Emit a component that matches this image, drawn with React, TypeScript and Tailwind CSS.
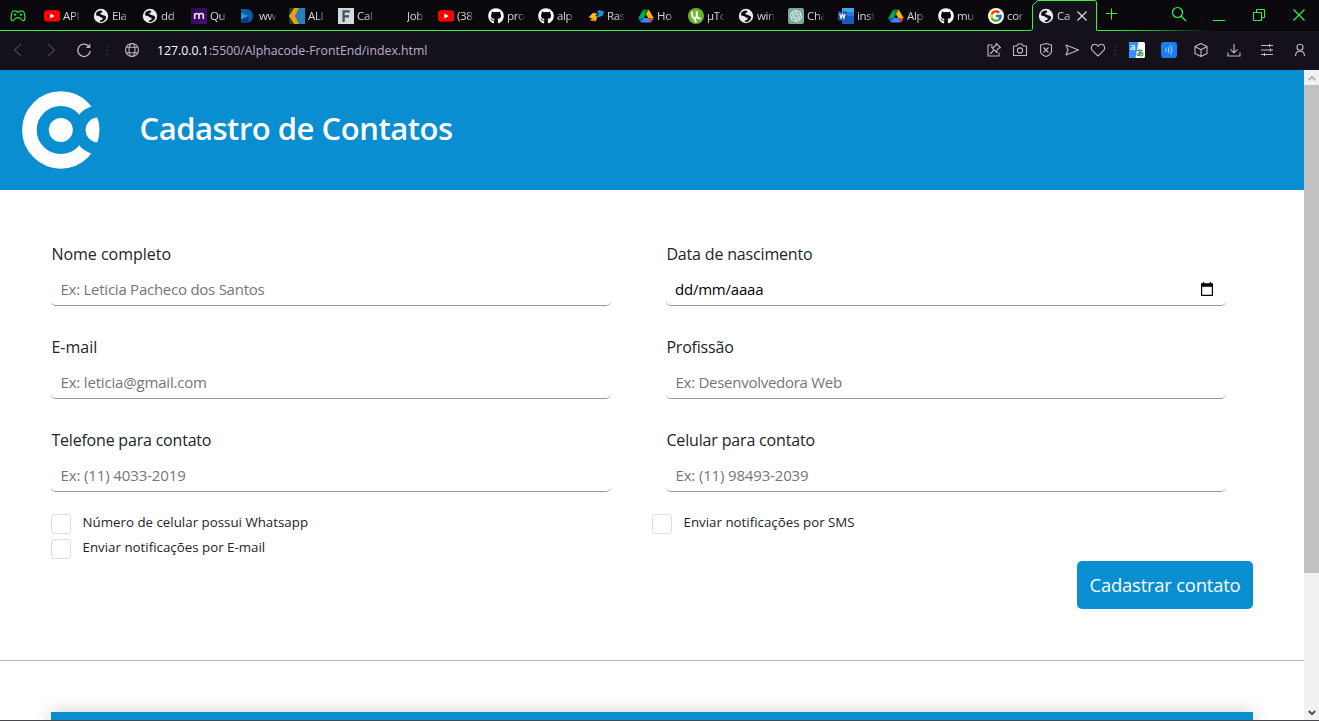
import type { ReactNode } from "react";
import { FaGithub } from "react-icons/fa";
import { FcGoogle } from "react-icons/fc";
import { SiOpenai } from "react-icons/si";

/* ---------- favicons ---------- */

function WorldIcon() {
  return (
    <svg viewBox="0 0 16 16" className="size-4">
      <circle cx="8" cy="8" r="7.2" fill="#e8eaed" />
      <path
        d="M8.600 2.600c-2-.2-3.600.5-4.700 1.900L2.800 7.200c1.400.2 2.200 1 3.600 1 .9 0 .9 1.300 2 1.400 1.100.1 1.600.6 1.300 1.400-.4 1-1.600 1-2.500 1.500l-.6 1.300c3.200.5 5.700-1.300 6.500-3.900.3-1.400-.8-2.400-2.200-2.500-1.300 0-1.300-1-2.500-1-1 .1-1.400-.5-1-1.200.4-.8 1.600-.5 2-1.300z"
        fill="#0b090f"
      />
      <path d="M2.800 4.200 5.800 5.500 4.300 6.800z" fill="#0b090f" />
    </svg>
  );
}

function YoutubeIcon() {
  return (
    <svg viewBox="0 0 16 16" className="size-4">
      <rect x="0" y="2.200" width="16" height="11.400" rx="2.800" fill="#f00" />
      <path d="M6.300 5.400v5L10.700 7.900z" fill="#fff" />
    </svg>
  );
}

function MIcon() {
  return (
    <svg viewBox="0 0 16 16" className="size-4">
      <defs>
        <linearGradient id="m-bg" x1="0" y1="0" x2="1" y2="1">
          <stop offset="0" stopColor="#2b0a4a" />
          <stop offset="1" stopColor="#4a0a80" />
        </linearGradient>
      </defs>
      <rect width="16" height="16" fill="url(#m-bg)" />
      <path d="M3.700 11V5.300M3.700 7.200c0-2.300 4.300-2.300 4.300 0V11M8 7.200c0-2.300 4.300-2.300 4.300 0V11" fill="none" stroke="#f0e6f6" strokeWidth="1.600" />
    </svg>
  );
}

function PlayDIcon() {
  return (
    <svg viewBox="0 0 16 16" className="size-4">
      <path d="M1 1h5.500a6.500 7 0 0 1 0 14H1z" fill="#0b5cab" />
      <path d="M1 10.500 8 8l1 7H1z" fill="#083c78" />
      <path d="M1 4.500 8.500 8 1 11.500z" fill="#2f8fd8" />
    </svg>
  );
}

function AliIcon() {
  return (
    <svg viewBox="0 0 16 16" className="size-4">
      <rect width="16" height="16" fill="#2780bd" />
      <path d="M0 0h6L1 8l5 8H0z" fill="#0c4a1c" />
      <path d="M5 0h5L5.800 8 10 16H5L0 8z" fill="#f99a0e" />
    </svg>
  );
}

function FIcon() {
  return (
    <svg viewBox="0 0 16 16" className="size-4">
      <rect width="16" height="16" fill="#d3dadc" />
      <path d="M5.600 14V3.300h6.200M5.600 8.300H11" fill="none" stroke="#3c5260" strokeWidth="2.200" />
    </svg>
  );
}

function RasIcon() {
  return (
    <svg viewBox="0 0 16 16" className="size-4">
      <path d="M9 3.700 11.300 2 16 3.600l-1.400 4.200L10 9.500 8.700 8.200l2.200-2.400z" fill="#1493d6" />
      <path d="M.5 9.500 4.700 5l4.800.5L7 8.300l2.300.2-1.500 4.700-5.500-.9L4 10z" fill="#fbc021" />
      <path d="m2.300 12.300 3.500-2.500 2 3.400z" fill="#f28a1c" />
    </svg>
  );
}

function DriveIcon() {
  return (
    <svg viewBox="0 0 16 16" className="size-4">
      <path d="M5.300 1.500h5.400L8 6.200z" fill="#188038" />
      <path d="M5.300 1.500 8 6.200 3 14.500.300 10z" fill="#00ac47" />
      <path d="M10.700 1.500 15.700 10h-5.400L8 6.200z" fill="#ffba00" />
      <path d="M.3 10h5.400L3 14.500z" fill="#0066da" />
      <path d="M5.700 10h4.600l2.700 4.500H3z" fill="#4285f4" />
      <path d="M10.300 10h5.400L13 14.500z" fill="#ea4335" />
    </svg>
  );
}

function TorrentIcon() {
  return (
    <svg viewBox="0 0 16 16" className="size-4">
      <circle cx="8" cy="8" r="8" fill="#69b62b" />
      <path d="M4 3.500c.2 3-.2 6.800 2.600 6.800 2.500 0 2.300-3.400 2.100-7M9 8c.7 2.500 2 3 3.800 2M6.500 10.300c.3 1.500.8 2.700 1.700 4" fill="none" stroke="#fff" strokeWidth="2" />
    </svg>
  );
}

function ChatIcon() {
  return (
    <span className="flex size-4 items-center justify-center rounded-[2px] bg-[#75a99c] text-[12px] text-white">
      <SiOpenai />
    </span>
  );
}

function WordIcon() {
  return (
    <svg viewBox="0 0 16 16" className="size-4">
      <rect x="4" width="12" height="16" rx="1" fill="#185abd" />
      <rect x="4" width="12" height="4.500" fill="#41a5ee" />
      <rect x="4" y="4" width="12" height="4" fill="#2b7cd3" />
      <rect y="3.500" width="9" height="9" rx=".8" fill="#1a50ae" />
      <path d="m1.800 5.700 1.300 4.600 1.400-4.300 1.400 4.300 1.300-4.600" fill="none" stroke="#fff" strokeWidth="1.200" />
    </svg>
  );
}

function GithubIcon() {
  return <FaGithub className="size-4 text-white" />;
}

function GoogleIcon() {
  return (
    <span className="flex size-4 items-center justify-center rounded-full bg-white">
      <FcGoogle className="size-[14px]" />
    </span>
  );
}

const tabs: { icon: ReactNode; label: string }[] = [
  { icon: <YoutubeIcon />, label: "API" },
  { icon: <WorldIcon />, label: "Ela" },
  { icon: <WorldIcon />, label: "dd" },
  { icon: <MIcon />, label: "Qu" },
  { icon: <PlayDIcon />, label: "ww" },
  { icon: <AliIcon />, label: "ALI" },
  { icon: <FIcon />, label: "Cal" },
  { icon: null, label: "Job" },
  { icon: <YoutubeIcon />, label: "(38" },
  { icon: <GithubIcon />, label: "pro" },
  { icon: <GithubIcon />, label: "alp" },
  { icon: <RasIcon />, label: "Ras" },
  { icon: <DriveIcon />, label: "Ho" },
  { icon: <TorrentIcon />, label: "µTo" },
  { icon: <WorldIcon />, label: "win" },
  { icon: <ChatIcon />, label: "Cha" },
  { icon: <WordIcon />, label: "inst" },
  { icon: <DriveIcon />, label: "Alp" },
  { icon: <GithubIcon />, label: "mu" },
  { icon: <GoogleIcon />, label: "cor" },
];

/* ---------- browser chrome ---------- */

function TabLabel({ children }: { children: ReactNode }) {
  return (
    <span className="w-[17px] overflow-hidden text-[11.5px] leading-4 tracking-[-0.35px] whitespace-nowrap text-[#d6d6da] [mask-image:linear-gradient(to_right,black_60%,rgba(0,0,0,0.15))]">
      {children}
    </span>
  );
}

function TabStrip() {
  return (
    <div className="relative flex h-[31px] w-full items-center bg-[#0a080d]">
      <svg className="absolute inset-0 h-[31px] w-full" viewBox="0 0 1319 31" fill="none">
        <defs>
          <linearGradient id="edge" x1="1097" x2="1212" y1="0" y2="0" gradientUnits="userSpaceOnUse">
            <stop offset="0" stopColor="#2cf84b" />
            <stop offset=".4" stopColor="#2cf84b" stopOpacity=".8" />
            <stop offset="1" stopColor="#2cf84b" stopOpacity="0" />
          </linearGradient>
        </defs>
        <path d="M1032.500 31V5.500l5-5h57.500l1.500 1.500V31z" fill="#15111b" />
        <path d="M0 30.500H1031l1.500-1.500V5.500l5-5H1095l1.500 1.500V30.500" stroke="#2cf84b" />
        <rect x="1097" y="30" width="115" height="1" fill="url(#edge)" />
      </svg>
      <div className="relative flex w-[44px] pl-[10px]">
        <svg viewBox="0 0 16 12" className="h-3 w-4" fill="none" stroke="#2cf84b" strokeWidth="1.100">
          <path d="M3.700 1h2.100l1 .9h2.400l1-.9h2.100c1.600 0 2.200 2 2.600 5.400.300 2.600-.300 4.300-1.700 4.300-1.700 0-2.200-2.800-3.700-2.800h-3c-1.500 0-2 2.800-3.700 2.800C1.400 10.700.8 9 1.100 6.400 1.500 3 2.100 1 3.700 1z" />
          <path d="M5 3.300v2.800M3.600 4.700h2.800M9.800 4.700h2.600M11.100 3.400V6" strokeWidth=".9" />
        </svg>
      </div>
      {tabs.map((t, i) => (
        <div key={i} className={`relative flex shrink-0 items-center gap-[3px] ${i < 6 ? "w-[49px]" : "w-[50px]"}`}>
          <span className="flex size-4 items-center">{t.icon}</span>
          <TabLabel>{t.label}</TabLabel>
        </div>
      ))}
      <div className="relative flex items-center gap-[3px]">
        <WorldIcon />
        <TabLabel>Ca</TabLabel>
        <svg viewBox="0 0 10 10" className="-ml-[0.5px] size-[10px]" stroke="#e6e6ea" strokeWidth="1.100">
          <path d="m.5.500 9 9M9.500.500l-9 9" />
        </svg>
      </div>
      <svg className="absolute top-0 right-0 h-[30px] w-[219px]" viewBox="1100 0 219 30" fill="none" stroke="#2cf84b">
        <path d="M1111.500 8.500v11M1106 13.500h11" />
        <circle cx="1177.500" cy="12.500" r="5" strokeWidth="1.200" />
        <path d="m1181 16 5 5" strokeWidth="1.200" />
        <path d="M1213 20.500h12" />
        <path d="M1253.500 12.500h8v8h-8zM1256.500 12.500V9.500h8v8H1261.500" />
        <path d="m1293.500 9.500 11 11M1304.500 9.500l-11 11" strokeWidth="1.200" />
      </svg>
    </div>
  );
}

function BarIcon({ children, dim }: { children: ReactNode; dim?: boolean }) {
  return (
    <svg
      viewBox="0 0 16 16"
      className="size-4 shrink-0"
      fill="none"
      stroke={dim ? "#4a4452" : "#c5b2d0"}
      strokeWidth="1.100"
      strokeLinejoin="round"
    >
      {children}
    </svg>
  );
}

function Dots() {
  return (
    <span className="flex w-[2px] flex-col gap-[3px]">
      <i className="h-[1px] w-[2px] bg-[#3c3645]" />
      <i className="h-[1px] w-[2px] bg-[#3c3645]" />
      <i className="h-[1px] w-[2px] bg-[#3c3645]" />
    </span>
  );
}

function AddressBar() {
  return (
    <div className="flex h-[39px] w-full items-center bg-[#15111b] pb-[1px] pl-[10px]">
      <BarIcon dim>
        <path d="m11 2-6.500 6L11 14" />
      </BarIcon>
      <span className="w-[17px]" />
      <BarIcon dim>
        <path d="m5 2 6.500 6L5 14" />
      </BarIcon>
      <span className="w-[17px]" />
      <BarIcon>
        <path d="M12.300 3.800A6.200 6.200 0 1 0 14.200 9" strokeWidth="1.300" />
        <path d="M14.300 1.500V6H9.800z" fill="#c5b2d0" stroke="none" />
      </BarIcon>
      <span className="w-[14px]" />
      <Dots />
      <span className="w-[16px]" />
      <BarIcon>
        <circle cx="8" cy="8" r="6.500" />
        <ellipse cx="8" cy="8" rx="3" ry="6.500" />
        <path d="M2.300 5.300h11.400M2.300 10.700h11.400" />
      </BarIcon>
      <span className="ml-[17px] pt-[2px] text-[12.3px] whitespace-nowrap text-[#bcaecb]">
        <span className="text-white">127.0.0.1</span>:5500/Alphacode-FrontEnd/index.html
      </span>
      <div className="ml-auto flex items-center pr-[11px]">
        <BarIcon>
          <path d="M6.500 3H2v11h11v-3.500" />
          <path d="m10.300 1.500 4.200 4.200-2 .6-1.700 1.800.1 2.600L5.300 5.100l2.600.1 1.800-1.700zM8 8l-4 4" />
        </BarIcon>
        <span className="w-[10px]" />
        <BarIcon>
          <path d="M1.500 4h3.300l1.200-2h4l1.200 2h3.300v9.500h-13z" />
          <circle cx="8" cy="8.500" r="2.600" />
        </BarIcon>
        <span className="w-[10px]" />
        <BarIcon>
          <path d="M8 1.500 13.500 3v6c0 2.500-2.500 4.500-5.500 5.500C5 13.500 2.500 11.500 2.500 9V3z" />
          <path d="m5.500 5.500 5 5M10.500 5.500l-5 5" />
        </BarIcon>
        <span className="w-[10px]" />
        <BarIcon>
          <path d="m2 3 12.500 5L2 13l2-5z" />
        </BarIcon>
        <span className="w-[10px]" />
        <BarIcon>
          <path d="M8 14 2.300 8.300C.200 6 1.600 2.300 4.700 2.300c1.600 0 2.700.9 3.300 2 .6-1.100 1.700-2 3.300-2 3.100 0 4.500 3.700 2.400 6z" />
        </BarIcon>
        <span className="w-[8px]" />
        <Dots />
        <span className="w-[13px]" />
        <svg viewBox="0 0 16 16" className="size-4 shrink-0">
          <rect width="16" height="16" rx="1.500" fill="#fff" />
          <path d="M1.500 0H9.500L6.500 16h-5A1.500 1.500 0 0 1 0 14.500v-13A1.500 1.500 0 0 1 1.500 0z" fill="#3390ff" />
          <text x="1" y="8" fontSize="9.500" fontWeight="600" fill="#fff">a</text>
          <text x="7" y="14" fontSize="8" fontWeight="700" fill="#2f8a3c" fontFamily="Noto Sans CJK JP">あ</text>
        </svg>
        <span className="w-[16px]" />
        <svg viewBox="0 0 16 16" className="size-4 shrink-0" fill="none" stroke="#fff">
          <rect width="16" height="16" rx="3" fill="#1a7df8" stroke="none" />
          <path d="M4.700 6.500a3 3 0 0 1 0 3.200M7 5a5 5 0 0 1 0 6M9.300 3.500a7 7 0 0 1 0 9" strokeWidth=".9" opacity=".85" />
        </svg>
        <span className="w-[16px]" />
        <BarIcon>
          <path d="m8 1.500 6 3v7l-6 3-6-3v-7zM2 4.500l6 3.200 6-3.200M8 7.700v6.800" />
        </BarIcon>
        <span className="w-[17px]" />
        <BarIcon>
          <path d="M8 2v8.500M4.500 7.300 8 10.800l3.500-3.500M2 10.500V14h12v-3.500" />
        </BarIcon>
        <span className="w-[17px]" />
        <BarIcon>
          <path d="M2 3.500h12M2 8h12M2 12.500h12M10.500 2v3M11.500 6.500v3M5.500 11v3" />
        </BarIcon>
        <span className="w-[17px]" />
        <BarIcon>
          <circle cx="8" cy="5.200" r="3" />
          <path d="M3.500 14c0-3 1.800-4.800 4.500-4.800s4.500 1.800 4.500 4.800" />
        </BarIcon>
      </div>
    </div>
  );
}

/* ---------- page ---------- */

function Logo() {
  return (
    <svg viewBox="0 0 78 78" className="size-[78px]" fill="#fff">
      <defs>
        <mask id="gap" maskUnits="userSpaceOnUse" x="0" y="0" width="78" height="78">
          <rect width="78" height="78" fill="#fff" />
          <circle cx="76" cy="39" r="24.300" fill="#000" />
        </mask>
        <clipPath id="outer">
          <circle cx="38.800" cy="39" r="38.700" />
        </clipPath>
      </defs>
      <circle cx="38.800" cy="39" r="31.400" fill="none" stroke="#fff" strokeWidth="14.600" mask="url(#gap)" />
      <circle cx="38.800" cy="39" r="12" />
      <circle cx="76" cy="39" r="12.400" clipPath="url(#outer)" />
    </svg>
  );
}

const fields = [
  { label: "Nome completo", track: "tracking-[-0.02px]", hint: "Ex: Leticia Pacheco dos Santos", hintTrack: "tracking-[-0.25px]" },
  { label: "Data de nascimento", track: "tracking-[-0.17px]", hint: "", hintTrack: "" },
  { label: "E-mail", track: "tracking-[0px]", hint: "Ex: leticia@gmail.com", hintTrack: "tracking-[-0.18px]" },
  { label: "Profissão", track: "tracking-[-0.2px]", hint: "Ex: Desenvolvedora Web", hintTrack: "tracking-[-0.27px]" },
  { label: "Telefone para contato", track: "tracking-[-0.2px]", hint: "Ex: (11) 4033-2019", hintTrack: "tracking-[-0.12px]" },
  { label: "Celular para contato", track: "tracking-[-0.16px]", hint: "Ex: (11) 98493-2039", hintTrack: "tracking-[-0.16px]" },
];

function Field({ label, track, hint, hintTrack }: (typeof fields)[number]) {
  return (
    <label className="block h-[93px] w-[560px]">
      <span className={`block h-6 pl-[0.4px] text-[16px] leading-6 text-[#212529] ${track}`}>{label}</span>
      {hint ? (
        <input
          placeholder={hint}
          className={`mt-[7px] block h-[33px] w-full rounded-[5px] border-b border-[#97979b] px-[9.5px] text-[15px] outline-none placeholder:text-[#72767b] ${hintTrack}`}
        />
      ) : (
        <span className="mt-[7px] flex h-[33px] w-full items-center justify-between rounded-[5px] border-b border-[#97979b] pr-[12px] pl-[9px] text-[15px] tracking-[-0.22px] text-black">
          dd/mm/aaaa
          <svg viewBox="0 0 14 14" className="mb-[1px] size-[14px]">
            <path d="M1 1.200h12V14H1zM2.200 4.800v8h9.600v-8z" fill="#000" fillRule="evenodd" />
            <path d="M3 0h1.200v2H3zM9.800 0H11v2H9.800z" fill="#000" />
          </svg>
        </span>
      )}
    </label>
  );
}

function Check({ children }: { children: string }) {
  return (
    <label className="flex h-[25px] items-start text-[13.3px] leading-[17px] tracking-[0.01px] text-[#212529]">
      <input type="checkbox" className="mr-[11.5px] size-5 appearance-none rounded-[3px] border border-[#dedee4] bg-white" />
      {children}
    </label>
  );
}

function ScrollBar() {
  return (
    <div className="flex w-[15px] shrink-0 flex-col justify-between bg-[#f1f1f1]">
      <div>
        <div className="flex h-[15px] items-center justify-center">
          <svg viewBox="0 0 8 6" className="h-[6px] w-2" fill="none" stroke="#b4b4b4" strokeWidth="2">
            <path d="m.8 5 3.200-3.200L7.200 5" />
          </svg>
        </div>
        <div className="h-[488px] bg-[#c1c1c1]" />
      </div>
      <div className="flex h-[15px] items-center justify-center">
        <svg viewBox="0 0 8 6" className="h-[6px] w-2" fill="none" stroke="#505050" strokeWidth="2">
          <path d="m.8 1 3.200 3.200L7.200 1" />
        </svg>
      </div>
    </div>
  );
}

export default function App() {
  return (
    <div className="flex h-[721px] w-[1319px] flex-col overflow-hidden bg-white font-['Open_Sans','Noto_Sans',sans-serif]">
      <TabStrip />
      <AddressBar />
      <div className="flex h-[650px] w-full">
        <div className="flex-1 overflow-hidden">
          <header className="flex h-[120px] items-center bg-[#088ed1] pl-[22px]">
            <Logo />
            <h1 className="ml-[39.5px] pb-[4px] text-[31px] font-semibold tracking-[-0.48px] whitespace-nowrap text-white">
              Cadastro de Contatos
            </h1>
          </header>
          <main>
            <form className="h-[471px] border-b border-[#b4b4b6] px-[51px] pt-[52px]">
              <div className="grid grid-cols-[615px_560px]">
                {fields.map((f) => (
                  <Field key={f.label} {...f} />
                ))}
              </div>
              <div className="-mt-[7px] grid grid-cols-[601px_500px]">
                <Check>Número de celular possui Whatsapp</Check>
                <Check>Enviar notificações por SMS</Check>
                <Check>Enviar notificações por E-mail</Check>
              </div>
              <div className="mt-[-3px] flex justify-end">
                <button type="button" className="h-12 w-[176px] rounded-[5px] bg-[#088ed1] pb-[1px] text-[18.4px] tracking-[-0.2px] text-white">
                  Cadastrar contato
                </button>
              </div>
            </form>
            <div className="mx-[51px] mt-[51px] h-10 bg-[#088ed1] shadow-[0_0_18px_rgba(0,0,0,0.2)]" />
          </main>
        </div>
        <ScrollBar />
      </div>
      <div className="h-px bg-[#45454b]" />
    </div>
  );
}
